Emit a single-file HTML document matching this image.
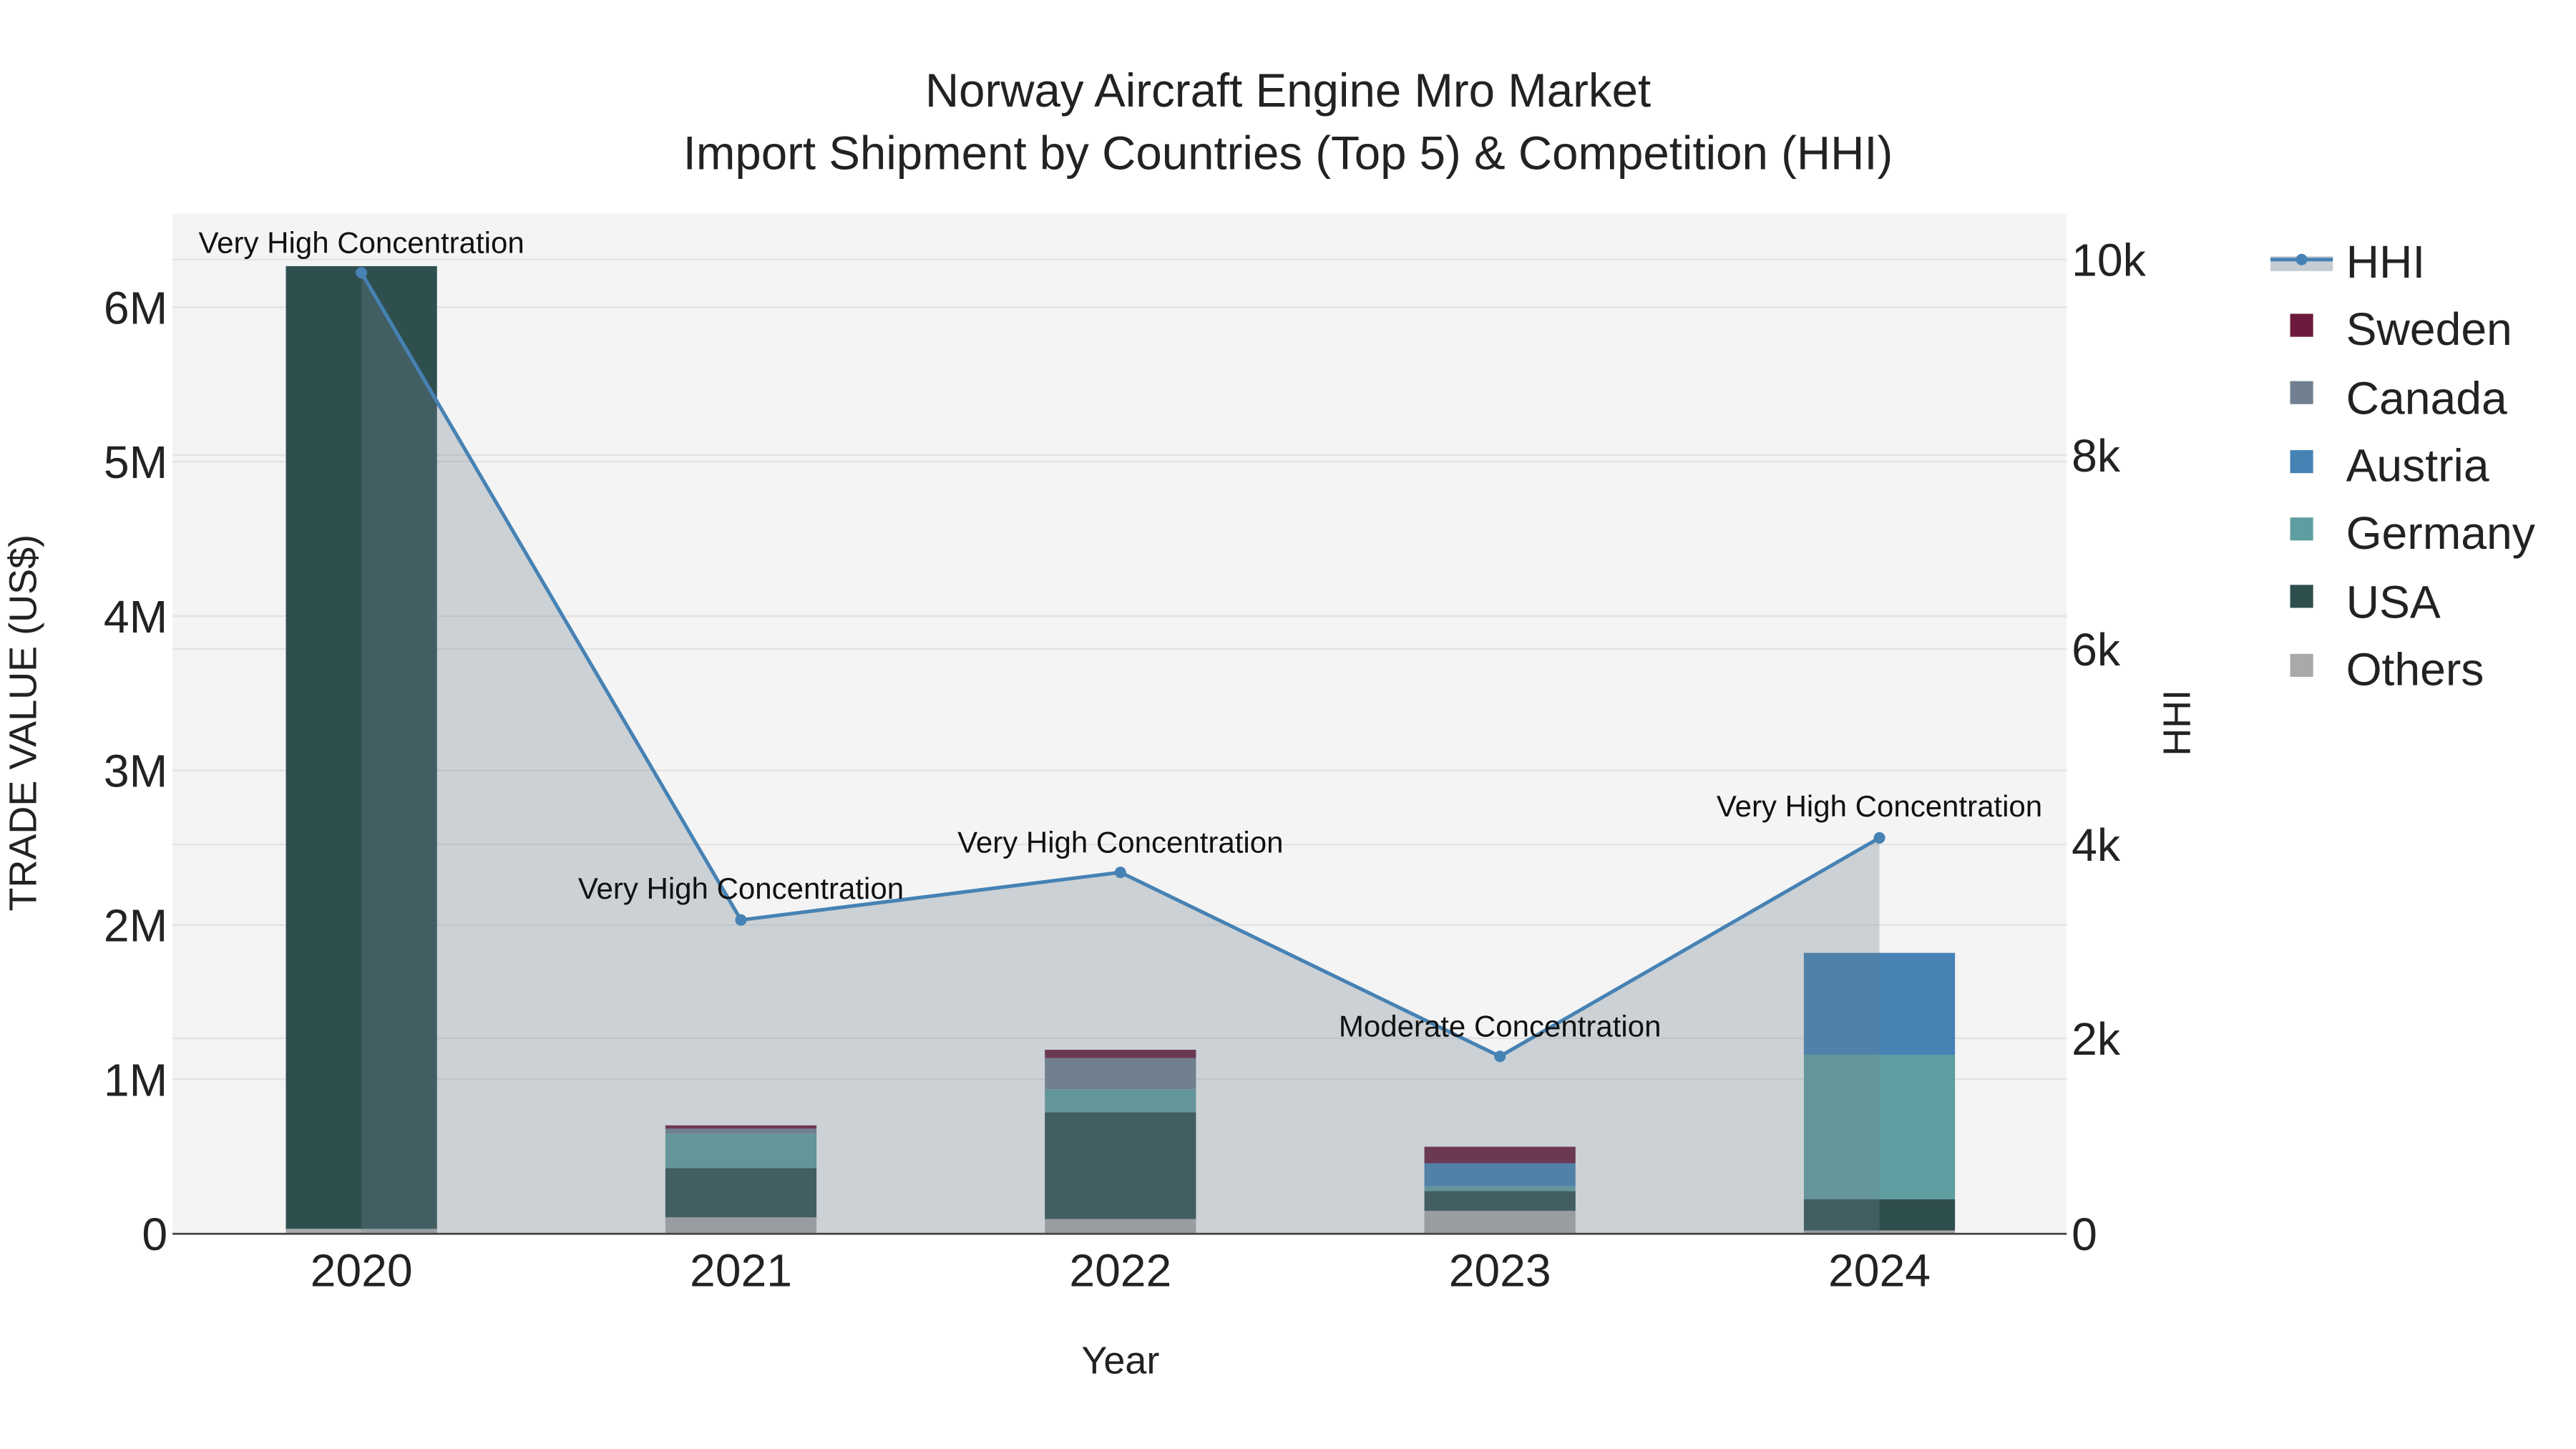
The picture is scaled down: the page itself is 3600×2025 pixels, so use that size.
<!DOCTYPE html>
<html><head><meta charset="utf-8"><style>html,body{margin:0;padding:0;background:#fff}svg{display:block}</style></head><body>
<svg width="3600" height="2025" viewBox="0 0 1568 882" xmlns="http://www.w3.org/2000/svg" font-family="Liberation Sans, Arial, sans-serif">
<rect x="0" y="0" width="1568" height="882" fill="#fff"/>
<rect x="105" y="130" width="1153" height="621" fill="#f4f4f4"/>
<g stroke="#e2e2e2" stroke-width="1">
<line x1="105" x2="1258" y1="657" y2="657"/><line x1="105" x2="1258" y1="563" y2="563"/><line x1="105" x2="1258" y1="469" y2="469"/><line x1="105" x2="1258" y1="375" y2="375"/><line x1="105" x2="1258" y1="281" y2="281"/><line x1="105" x2="1258" y1="187" y2="187"/>
<line x1="105" x2="1258" y1="632" y2="632"/><line x1="105" x2="1258" y1="514" y2="514"/><line x1="105" x2="1258" y1="395" y2="395"/><line x1="105" x2="1258" y1="277" y2="277"/><line x1="105" x2="1258" y1="158" y2="158"/>
</g>
<g>
<rect x="174" y="748" width="92" height="3" fill="#a9a9a9"/><rect x="174" y="162" width="92" height="586" fill="#2f4f4f"/>
<rect x="405" y="741" width="92" height="10" fill="#a9a9a9"/><rect x="405" y="711" width="92" height="30" fill="#2f4f4f"/><rect x="405" y="690" width="92" height="21" fill="#5f9ea0"/><rect x="405" y="687" width="92" height="3" fill="#708090"/><rect x="405" y="685" width="92" height="2" fill="#6b1a3d"/>
<rect x="636" y="742" width="92" height="9" fill="#a9a9a9"/><rect x="636" y="677" width="92" height="65" fill="#2f4f4f"/><rect x="636" y="663" width="92" height="14" fill="#5f9ea0"/><rect x="636" y="644" width="92" height="19" fill="#708090"/><rect x="636" y="639" width="92" height="5" fill="#6b1a3d"/>
<rect x="867" y="737" width="92" height="14" fill="#a9a9a9"/><rect x="867" y="725" width="92" height="12" fill="#2f4f4f"/><rect x="867" y="722" width="92" height="3" fill="#5f9ea0"/><rect x="867" y="708" width="92" height="14" fill="#4682b4"/><rect x="867" y="698" width="92" height="10" fill="#6b1a3d"/>
<rect x="1098" y="749" width="92" height="2" fill="#a9a9a9"/><rect x="1098" y="730" width="92" height="19" fill="#2f4f4f"/><rect x="1098" y="642" width="92" height="88" fill="#5f9ea0"/><rect x="1098" y="580" width="92" height="62" fill="#4682b4"/>
</g>
<polygon points="220,751 220,166 451,560 682,531 913,643 1144,510 1144,751" fill="rgba(112,128,144,0.3)"/>
<polyline points="220,166 451,560 682,531 913,643 1144,510" fill="none" stroke="#4682b4" stroke-width="2.2"/>
<g fill="#4682b4"><circle cx="220" cy="166" r="3.5"/><circle cx="451" cy="560" r="3.5"/><circle cx="682" cy="531" r="3.5"/><circle cx="913" cy="643" r="3.5"/><circle cx="1144" cy="510" r="3.5"/></g>
<line x1="105" x2="1258" y1="751" y2="751" stroke="#444" stroke-width="1.2"/>
<g font-size="18.3" fill="#111" text-anchor="middle">
<text x="220" y="154">Very High Concentration</text><text x="451" y="547">Very High Concentration</text><text x="682" y="519">Very High Concentration</text><text x="913" y="631">Moderate Concentration</text><text x="1144" y="497">Very High Concentration</text>
</g>
<g font-size="28" fill="#222" text-anchor="end">
<text x="102" y="761">0</text><text x="102" y="667">1M</text><text x="102" y="573">2M</text><text x="102" y="479">3M</text><text x="102" y="385">4M</text><text x="102" y="291">5M</text><text x="102" y="197">6M</text>
</g>
<g font-size="28" fill="#222" text-anchor="start">
<text x="1261" y="761">0</text><text x="1261" y="642">2k</text><text x="1261" y="524">4k</text><text x="1261" y="405">6k</text><text x="1261" y="287">8k</text><text x="1261" y="168">10k</text>
</g>
<g font-size="28" fill="#222" text-anchor="middle">
<text x="220" y="783">2020</text><text x="451" y="783">2021</text><text x="682" y="783">2022</text><text x="913" y="783">2023</text><text x="1144" y="783">2024</text>
</g>
<g font-size="28.5" fill="#222" text-anchor="middle"><text x="784" y="65">Norway Aircraft Engine Mro Market</text><text x="784" y="103">Import Shipment by Countries (Top 5) &amp; Competition (HHI)</text></g>
<text x="682" y="836" font-size="23.5" fill="#222" text-anchor="middle">Year</text>
<text transform="translate(22,440) rotate(-90)" font-size="23.5" fill="#222" text-anchor="middle">TRADE VALUE (US$)</text>
<text transform="translate(1333,440) rotate(-90)" font-size="23.5" fill="#222" text-anchor="middle">HHI</text>
<g>
<rect x="1382" y="156" width="38" height="9" fill="rgba(112,128,144,0.4)"/><line x1="1382" x2="1420" y1="158" y2="158" stroke="#4682b4" stroke-width="2.2"/><circle cx="1401" cy="158" r="3.5" fill="#4682b4"/>
<rect x="1394" y="191" width="14" height="14" fill="#6b1a3d"/><rect x="1394" y="232" width="14" height="14" fill="#708090"/><rect x="1394" y="274" width="14" height="14" fill="#4682b4"/><rect x="1394" y="315" width="14" height="14" fill="#5f9ea0"/><rect x="1394" y="356" width="14" height="14" fill="#2f4f4f"/><rect x="1394" y="398" width="14" height="14" fill="#a9a9a9"/>
<g font-size="28" fill="#222"><text x="1428" y="169">HHI</text><text x="1428" y="210">Sweden</text><text x="1428" y="252">Canada</text><text x="1428" y="293">Austria</text><text x="1428" y="334">Germany</text><text x="1428" y="376">USA</text><text x="1428" y="417">Others</text></g>
</g>
</svg>
</body></html>
